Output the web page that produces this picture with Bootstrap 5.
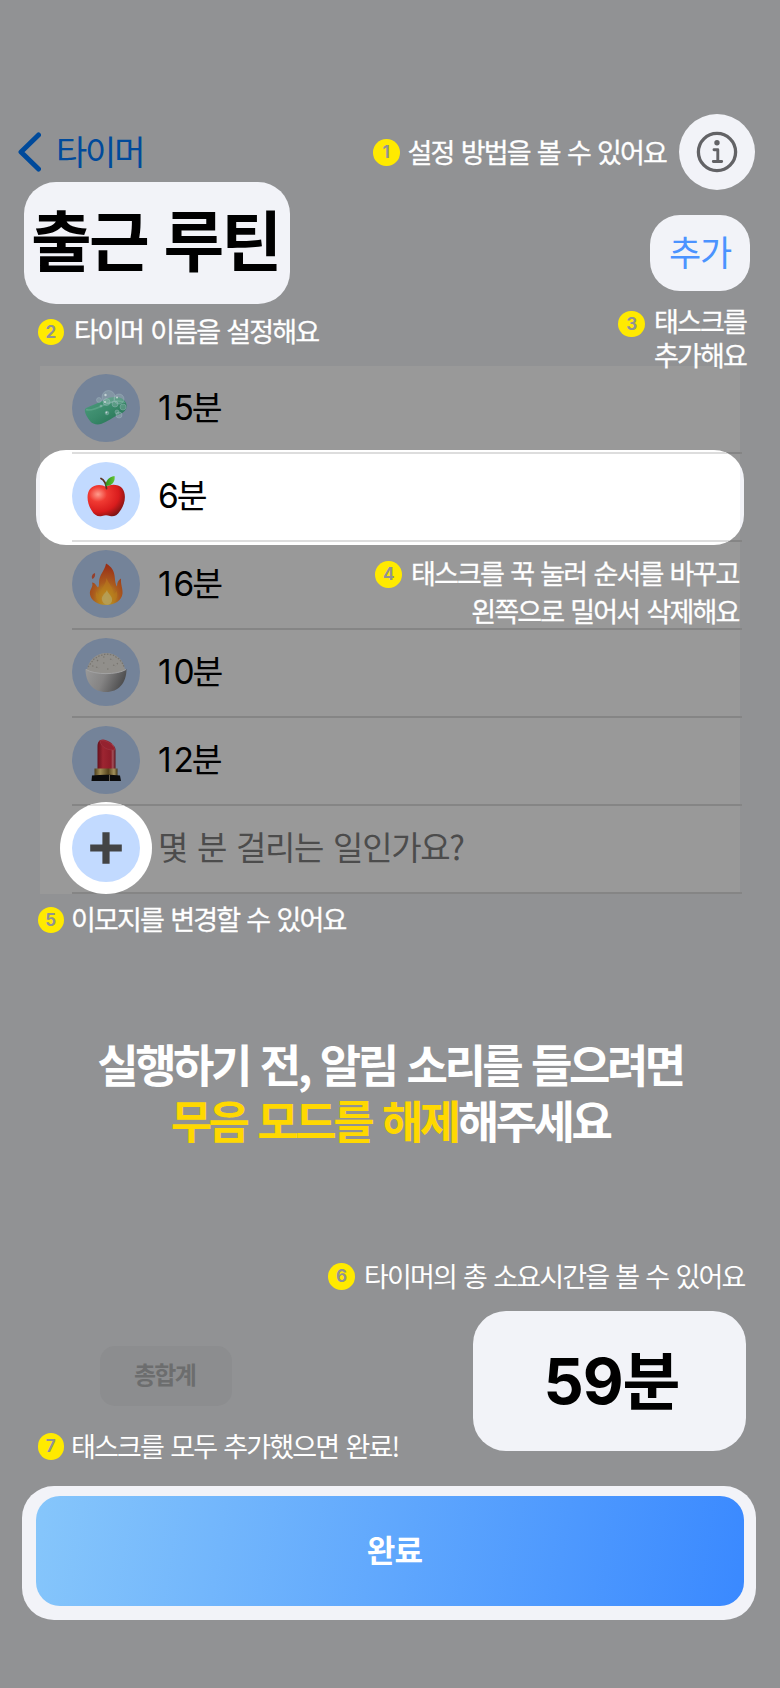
<!DOCTYPE html>
<html lang="ko">
<head>
<meta charset="utf-8">
<meta name="viewport" content="width=device-width, initial-scale=1">
<title>출근 루틴</title>
<link href="https://cdn.jsdelivr.net/npm/bootstrap@5.3.0/dist/css/bootstrap.min.css" rel="stylesheet">
<style>
  body { background:#919294; font-family:"Noto Sans CJK KR",sans-serif; color:#000; }
  .screen { width:780px; height:1688px; padding-top:114px; overflow:hidden; }
  .spot { background:#f2f3f8; }
  .topbar { height:68px; padding:0 25px 0 18px; }
  .back { color:#004a9b; height:76px; font-size:34px; letter-spacing:-2.2px; font-weight:400; }
  .back span { margin-left:15px; line-height:50px; margin-top:-3px; }
  .info { width:76px; height:76px; }
  .hint { color:#fff; font-size:27px; letter-spacing:-1.84px; word-spacing:1.4px; line-height:34px; font-weight:400; white-space:nowrap; }
  .hint .txt { margin-top:-.5px; }
  .hint .two { margin-top:-3px; }
  .strong .txt { -webkit-text-stroke:.3px #fff; }
  .num { width:26.6px; height:26.6px; background:#ffea00; color:#919294; font:700 17px/26.6px Inter,sans-serif; letter-spacing:0; text-align:center; margin-top:4px; }
  .titlerow { height:122px; padding:0 30px 0 24px; }
  .title { width:266px; height:122px; border-radius:32px; font-size:66px; font-weight:700; letter-spacing:-2.7px; word-spacing:.6px; line-height:110px; padding-left:7px; white-space:nowrap; }
  .add { width:100px; height:76px; margin-top:33px; border-radius:30px; color:#4b93ff; font-size:35px; letter-spacing:-1.2px; line-height:72px; }
  .hintrow { height:62px; padding:0 34px 0 37.5px; }
  .tasks { width:700px; height:528px; margin-left:40px; background:#999; }
  .task { height:88px; padding:8px 0 0 32px; font-family:Inter,"Noto Sans CJK KR",sans-serif; font-size:33.5px; letter-spacing:-2px; }
  .task::before { content:""; position:absolute; left:32px; top:86px; width:670px; height:2px; background:#858585; }
  .task > span { margin-left:18px; line-height:68px; position:relative; }
  .ten { letter-spacing:1.8px; }
  .emoji { width:68px; height:68px; border-radius:50%; background:#748399; position:relative; flex:none; }
  .emoji svg { display:block; }
  .lit .emoji { background:#c2daff; }
  .glow { position:absolute; left:-4px; top:-4px; width:708px; height:94.5px; border-radius:30px; background:linear-gradient(90deg,#f2f3f8 4px,#fff 4px 704px,#f2f3f8 704px); overflow:hidden; }
  .glow::before, .glow::after { content:""; position:absolute; left:36px; right:2px; height:2px; background:#ddd; }
  .glow::before { top:2px; } .glow::after { top:90px; }
  .halo { position:absolute; left:20px; top:-4px; width:92px; height:92px; border-radius:50%; background:#fff; overflow:hidden; }
  .halo::before { content:""; position:absolute; left:12px; top:2px; width:100%; height:2px; background:#ddd; }
  .swipe { position:absolute; right:1.5px; top:191px; line-height:38px; text-align:right; }
  .task > .ask { color:#4c4c4c; font-family:"Noto Sans CJK KR",sans-serif; font-size:33px; letter-spacing:-1.3px; word-spacing:2px; line-height:64px; margin-left:18px; }
  .notice { font-size:45px; font-weight:700; letter-spacing:-3.5px; word-spacing:1.8px; line-height:56.4px; color:#fff; margin-top:101.5px; white-space:nowrap; }
  .notice em { font-style:normal; color:#ffd800; }
  .sumrow { height:140px; padding:0 34px 0 100px; }
  .pill { width:132px; height:60px; margin-top:35px; border-radius:15px; background:#8c8d8f; color:#6c6d6e; font-size:24px; font-weight:700; letter-spacing:-1.7px; line-height:56px; padding-right:3px; }
  .total { width:273px; height:140px; border-radius:33px; font-family:Inter,"Noto Sans CJK KR",sans-serif; font-weight:700; font-size:63px; letter-spacing:-1px; line-height:140px; padding-left:4px; }
  .frame { width:734px; height:134px; margin-left:22px; border-radius:32px; padding:10px 12px 14px 14px; }
  .done { width:708px; height:110px; border:0; border-radius:24px; background:linear-gradient(99deg,#86c6fb 0%,#3a89ff 100%); color:#fff; font-weight:700; font-size:31px; letter-spacing:-.8px; padding:0 0 4px 9px; }
</style>
</head>
<body>
<main class="screen">
  <header class="topbar d-flex justify-content-between align-items-start">
    <a class="back d-flex align-items-center text-decoration-none" href="#">
      <svg width="23" height="40" viewBox="0 0 23 40"><path d="M20.5 3 3 20l17.500 17" fill="none" stroke="#004a9b" stroke-width="5" stroke-linecap="round" stroke-linejoin="round"/></svg>
      <span>타이머</span>
    </a>
    <div class="d-flex">
      <div class="hint strong d-flex" style="padding-top:21px"><b class="num rounded-circle">1</b><span class="txt" style="margin-left:8px;margin-right:13px">설정 방법을 볼 수 있어요</span></div>
      <div class="info spot rounded-circle d-flex align-items-center justify-content-center">
        <svg width="42" height="42" viewBox="0 0 42 42" fill="none" stroke="#636366" stroke-linecap="round" stroke-linejoin="round"><circle cx="21" cy="21" r="18.600" stroke-width="3.300"/><path d="M18 18.700h3.800v11.500M17.300 30.500h8.400" stroke-width="2.900"/><circle cx="21" cy="11.700" r="2.700" fill="#636366" stroke="none"/></svg>
      </div>
    </div>
  </header>

  <section class="titlerow d-flex justify-content-between">
    <h1 class="title spot mb-0">출근 루틴</h1>
    <div class="add spot text-center">추가</div>
  </section>

  <section class="hintrow d-flex justify-content-between position-relative z-1">
    <div class="hint strong d-flex" style="padding-top:10.500px"><b class="num rounded-circle">2</b><span class="txt" style="margin-left:10px">타이머 이름을 설정해요</span></div>
    <div class="hint strong d-flex" style="padding-top:2.500px"><b class="num rounded-circle">3</b><span class="txt two" style="margin-left:9px">태스크를<br>추가해요</span></div>
  </section>

  <section class="tasks position-relative">
    <div class="task d-flex position-relative">
      <div class="emoji"><svg width="68" height="68" viewBox="0 0 68 68">
        <defs><linearGradient id="soap" x1="0" y1="0" x2="1" y2="1"><stop offset="0" stop-color="#4f9d7f"/><stop offset=".5" stop-color="#3a8a6b"/><stop offset="1" stop-color="#1f6b4c"/></linearGradient></defs>
        <path d="M13 35c2-2 16-7 21-10 7-3 17-3 20 4 2 5-1 9-6 11-7 3-13 8-19 10-4 1-9 0-11-3-2-3-6-8-5-12Z" fill="url(#soap)"/>
        <path d="M14 35.500c4 2 13-2 19-5s14-5 20-2" fill="none" stroke="#69ad93" stroke-width="1.500" opacity=".6"/>
        <g fill="#a5c2c1" fill-opacity=".3" stroke="#a9bfc6" stroke-opacity=".6" stroke-width=".6"><circle cx="36.500" cy="23" r="6.500"/><circle cx="47" cy="25" r="5"/><circle cx="34.500" cy="28" r="3.500"/><circle cx="27" cy="26" r="2.500"/><circle cx="43" cy="30" r="3"/><circle cx="51" cy="33" r="3"/><circle cx="35" cy="39" r="1.800"/><circle cx="45" cy="38" r="2"/><circle cx="29" cy="32" r="1"/><circle cx="47" cy="41" r="3"/></g>
        <g fill="#c3d2d4"><circle cx="33.500" cy="21" r="1.200"/><circle cx="45" cy="23.500" r="1"/><circle cx="33" cy="28" r="1"/><circle cx="34.500" cy="38.500" r=".9"/></g>
      </svg></div><span><span class="ten">1</span>5분</span>
    </div>
    <div class="task lit d-flex position-relative">
      <div class="glow"></div>
      <div class="emoji"><svg width="68" height="68" viewBox="0 0 68 68">
        <defs><radialGradient id="apple" cx=".28" cy=".3" r=".8"><stop offset="0" stop-color="#ff9c8c"/><stop offset=".3" stop-color="#f03a32"/><stop offset=".7" stop-color="#d91c1d"/><stop offset="1" stop-color="#7c1413"/></radialGradient><linearGradient id="leaf" x1="0" x2="1"><stop offset="0" stop-color="#2f8e17"/><stop offset="1" stop-color="#62c636"/></linearGradient></defs>
        <path d="M34 25c4-3 12-3 16 1 5 6 3 17-2 23-3 5-7 6-10 5-3-1-5-1-8 0-4 1-8-1-10-5-5-7-6-17-2-22 4-5 12-5 16-2Z" fill="url(#apple)"/>
        <path d="M34.500 26.500C34 22 32 18 29 16.500" fill="none" stroke="#5d3423" stroke-width="1.800" stroke-linecap="round"/>
        <path d="M33.500 24c0-5 3-9 9-10 1 5-2 10-9 10Z" fill="url(#leaf)"/>
      </svg></div><span>6분</span>
    </div>
    <div class="task d-flex position-relative">
      <div class="emoji"><svg width="68" height="68" viewBox="0 0 68 68">
        <defs><radialGradient id="fire" cx=".5" cy=".85" r=".8"><stop offset="0" stop-color="#b9ad83"/><stop offset=".22" stop-color="#b68b20"/><stop offset=".5" stop-color="#aa5b1e"/><stop offset="1" stop-color="#992f16"/></radialGradient></defs>
        <path d="M34 13.500c-1 7-7 11-7 19 0 2 0 4-1 5-2-2-3-5-6-5 2 4-3 7-2 12 1 6 8 10.500 16 10.500s16-4.500 16.500-11.500c.5-5-2-9-1.500-15-3 2-4 4-4 8-4-7 1-16-11-23Z" fill="url(#fire)"/>
        <path d="M34.500 28c-1 8-6 10-7 17-2-1-3-2-3-4-3 7 3 13 10 13s13-6 10-13c-1 2-2 3-3 3 0-7-5-10-7-16Z" fill="#b9791c" opacity=".6"/>
        <path d="M35 40c-2 4-6 6-5 10 1 6 9 6 10 1 1-5-4-7-5-11Z" fill="#b5a35b" opacity=".8"/>
        <path d="M23 23c-3 1-4 4-2.500 6 2-1 3-3 2.500-6Z" fill="#95402c"/>
      </svg></div><span><span class="ten">1</span>6분</span>
    </div>
    <div class="task d-flex position-relative">
      <div class="emoji"><svg width="68" height="68" viewBox="0 0 68 68">
        <defs><linearGradient id="bowl" x1="0" x2="1" y2=".25"><stop offset="0" stop-color="#999"/><stop offset=".5" stop-color="#858484"/><stop offset="1" stop-color="#4e4e4f"/></linearGradient></defs>
        <path d="M15 32c1-10 10-17 19-17 10 0 18 7 19 17-6 5-32 5-38 0Z" fill="#918f8b"/>
        <path d="M16 29l3-4 3-4 5-3 7-2 7 1 6 4 4 5 1 3M20 28h3m2-6 2 2m4-5h3m4 2 3 1m4 3 1 2m-15-2h3m-10 4 3 1m8 1h3m3-4 3 1" fill="none" stroke="#77746e" stroke-width="1.200" stroke-dasharray="1.500 1.500"/>
        <path d="M13.500 31c9 6 32 6 41 0 0 14-8 23-20.500 23S13.500 45 13.500 31Z" fill="url(#bowl)"/>
        <path d="M14 31.500c9 5.500 31 5.500 40 0" fill="none" stroke="#a3a3a3" stroke-width="1"/>
      </svg></div><span><span class="ten">1</span>0분</span>
    </div>
    <div class="task d-flex position-relative">
      <div class="emoji"><svg width="68" height="68" viewBox="0 0 68 68">
        <defs><linearGradient id="lip" x1="0" x2="1"><stop offset="0" stop-color="#65101c"/><stop offset=".3" stop-color="#9d2531"/><stop offset=".75" stop-color="#8e1c29"/><stop offset=".85" stop-color="#a2525b"/><stop offset="1" stop-color="#5b0e19"/></linearGradient><linearGradient id="gold" x1="0" x2="1"><stop offset="0" stop-color="#4e3f1c"/><stop offset=".25" stop-color="#a08d55"/><stop offset=".6" stop-color="#57451d"/><stop offset=".85" stop-color="#a3925e"/><stop offset="1" stop-color="#463716"/></linearGradient></defs>
        <path d="M25.500 43V20c0-4 2-7 6-6.500 5 1 12 5 12 10.500v19Z" fill="url(#lip)"/>
        <path d="M28 14.800c4-1.500 14 3 15 9-6 1-14-2-15-9Z" fill="#94222f" stroke="#a13945" stroke-width=".6"/>
        <path d="M22.500 42.500h23V50h-23Z" fill="url(#gold)"/>
        <path d="M20 49.500c9-1 20-1 28 0l1 5.500H19.500Z" fill="#0b0b0c"/><path d="M37.500 49v6" stroke="#625b4e" stroke-width="1"/>
      </svg></div><span><span class="ten">1</span>2분</span>
    </div>
    <div class="task lit d-flex position-relative">
      <div class="halo"></div>
      <div class="emoji"><svg width="68" height="68" viewBox="0 0 68 68"><path d="M34 18.200v31.600M18.200 34h31.600" stroke="#434445" stroke-width="7.200"/></svg></div>
      <span class="ask">몇 분 걸리는 일인가요?</span>
    </div>
    <div class="swipe hint strong d-flex"><b class="num rounded-circle">4</b><span class="txt two" style="margin-left:9px">태스크를 꾹 눌러 순서를 바꾸고<br>왼쪽으로 밀어서 삭제해요</span></div>
  </section>

  <div class="hint strong d-flex" style="padding:8.500px 0 0 37.500px;height:40px"><b class="num rounded-circle">5</b><span class="txt" style="margin-left:7px">이모지를 변경할 수 있어요</span></div>

  <p class="notice text-center mb-0">실행하기 전, 알림 소리를 들으려면<br><em>무음 모드를 해제</em>해주세요</p>

  <div class="hint d-flex justify-content-end" style="padding-right:35.500px;margin-top:110.700px;height:52px"><b class="num rounded-circle">6</b><span class="txt" style="margin-left:9px">타이머의 총 소요시간을 볼 수 있어요</span></div>

  <section class="sumrow d-flex justify-content-between">
    <div class="pill text-center">총합계</div>
    <div class="total spot text-center">59분</div>
  </section>

  <div class="hint d-flex" style="padding-left:37.500px;margin-top:-22px;height:57px"><b class="num rounded-circle">7</b><span class="txt" style="margin-left:7px">태스크를 모두 추가했으면 완료!</span></div>

  <div class="frame spot"><button class="done" type="button">완료</button></div>
</main>
<script src="https://cdn.jsdelivr.net/npm/bootstrap@5.3.0/dist/js/bootstrap.bundle.min.js"></script>
</body>
</html>
